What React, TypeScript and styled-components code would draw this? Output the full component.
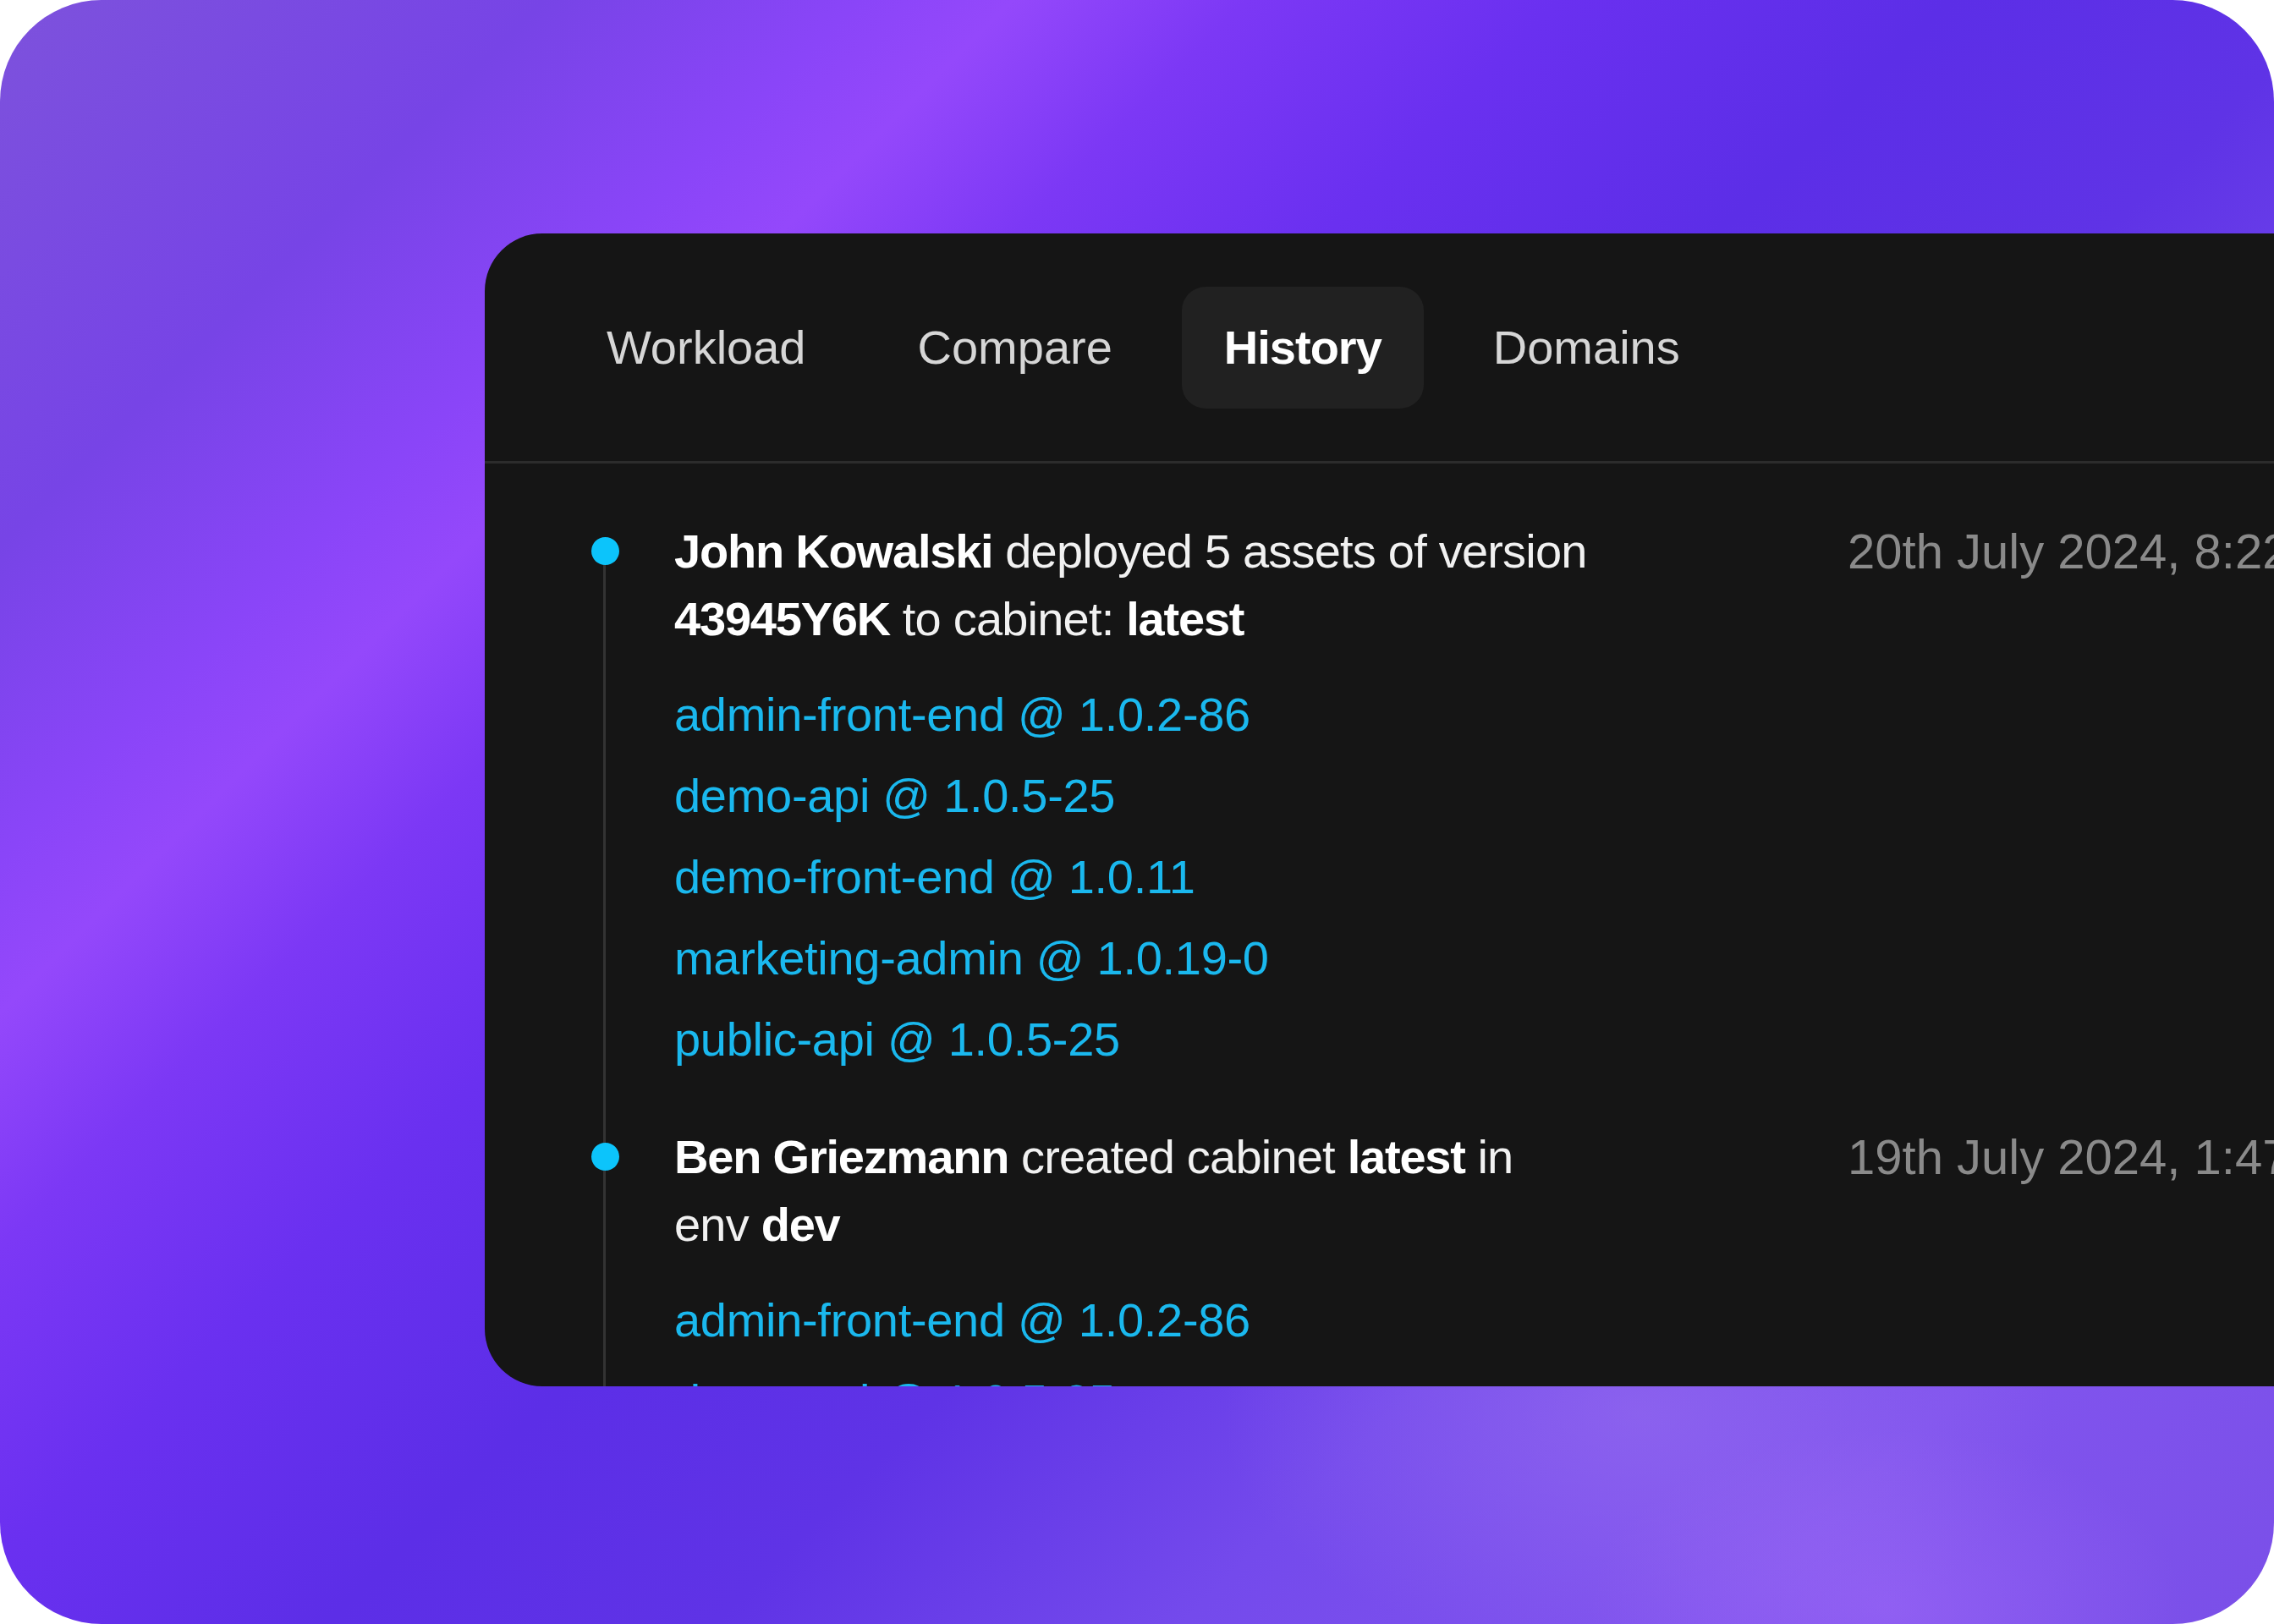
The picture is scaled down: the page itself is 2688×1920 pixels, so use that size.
import React from 'react'
import styled, { createGlobalStyle } from 'styled-components'

const GlobalStyle = createGlobalStyle`
  html, body {
    margin: 0;
    padding: 0;
    background: #ffffff;
    overflow: hidden;
  }
  * {
    box-sizing: border-box;
  }
`

const Frame = styled.div`
  width: 2688px;
  height: 1920px;
  border-radius: 120px;
  overflow: hidden;
  padding: 276px 0 0 573px;
  background:
    radial-gradient(ellipse 700px 420px at 72% 87%, rgba(160, 120, 240, 0.45), transparent 70%),
    radial-gradient(ellipse 500px 300px at 83% 99%, rgba(165, 110, 250, 0.45), transparent 70%),
    linear-gradient(
      135deg,
      #7d52dc 0%,
      #7744e6 14%,
      #8a45f8 22%,
      #9448fb 26%,
      #7c38f5 32%,
      #6a30f0 40%,
      #5c2ee7 50%,
      #5f33e6 60%,
      #744aec 72%,
      #8154ee 86%,
      #7a4fe8 100%
    );
  font-family: 'Liberation Sans', Arial, sans-serif;
`

const Card = styled.section`
  width: 2300px;
  height: 1363px;
  background: #151515;
  border-radius: 68px;
  overflow: hidden;
  display: flex;
  flex-direction: column;
`

const TabBar = styled.nav`
  display: flex;
  gap: 32px;
  padding: 63px 0 62px 94px;
  border-bottom: 3px solid #2c2c2c;
`

const Tab = styled.div<{ $active?: boolean }>`
  height: 144px;
  line-height: 144px;
  padding: 0 50px;
  border-radius: 28px;
  font-size: 56px;
  font-weight: ${p => (p.$active ? 700 : 400)};
  letter-spacing: ${p => (p.$active ? '-1px' : '0')};
  color: ${p => (p.$active ? '#ffffff' : '#d6d6d6')};
  background: ${p => (p.$active ? '#212121' : 'transparent')};
`

const Timeline = styled.div`
  position: relative;
  padding: 64px 0 0 126px;
  display: flex;
  flex-direction: column;
  gap: 51px;

  &::before {
    content: '';
    position: absolute;
    left: 140px;
    top: 100px;
    bottom: 0;
    width: 3px;
    background: #333333;
  }
`

const Event = styled.article`
  display: grid;
  grid-template-columns: 33px 1322px max-content;
  column-gap: 65px;
  align-items: start;
`

const Dot = styled.span`
  position: relative;
  z-index: 1;
  width: 33px;
  height: 33px;
  margin-top: 23px;
  border-radius: 50%;
  background: #0cc4fb;
`

const Body = styled.div`
  display: flex;
  flex-direction: column;
  gap: 25px;
`

const Heading = styled.p`
  margin: 0;
  max-width: 1086px;
  font-size: 56px;
  line-height: 80px;
  letter-spacing: -0.8px;
  color: #f1f1f1;

  b {
    font-weight: 700;
    letter-spacing: -1.2px;
    color: #ffffff;
  }
`

const Assets = styled.ul`
  margin: 0;
  padding: 0;
  list-style: none;
`

const Asset = styled.li`
  font-size: 56px;
  line-height: 96px;
  letter-spacing: -0.3px;
  color: #1ab8ee;
  white-space: nowrap;
`

const Stamp = styled.time`
  font-size: 58px;
  line-height: 80px;
  color: #8a8a8a;
  white-space: nowrap;
`

type HistoryEvent = {
  heading: React.ReactNode
  assets: string[]
  stamp: string
}

const events: HistoryEvent[] = [
  {
    heading: (
      <>
        <b>John Kowalski</b> deployed 5 assets of version <b>43945Y6K</b> to cabinet: <b>latest</b>
      </>
    ),
    assets: [
      'admin-front-end @ 1.0.2-86',
      'demo-api @ 1.0.5-25',
      'demo-front-end @ 1.0.11',
      'marketing-admin @ 1.0.19-0',
      'public-api @ 1.0.5-25',
    ],
    stamp: '20th July 2024, 8:22:41 PM',
  },
  {
    heading: (
      <>
        <b>Ben Griezmann</b> created cabinet <b>latest</b> in env <b>dev</b>
      </>
    ),
    assets: ['admin-front-end @ 1.0.2-86', 'demo-api @ 1.0.5-25', 'demo-front-end @ 1.0.11'],
    stamp: '19th July 2024, 1:47:09 PM',
  },
]

const tabs = ['Workload', 'Compare', 'History', 'Domains']

export default function App() {
  return (
    <>
      <GlobalStyle />
      <Frame>
        <Card>
          <TabBar>
            {tabs.map(t => (
              <Tab key={t} $active={t === 'History'}>
                {t}
              </Tab>
            ))}
          </TabBar>
          <Timeline>
            {events.map((e, i) => (
              <Event key={i}>
                <Dot />
                <Body>
                  <Heading>{e.heading}</Heading>
                  <Assets>
                    {e.assets.map(a => (
                      <Asset key={a}>{a}</Asset>
                    ))}
                  </Assets>
                </Body>
                <Stamp>{e.stamp}</Stamp>
              </Event>
            ))}
          </Timeline>
        </Card>
      </Frame>
    </>
  )
}
